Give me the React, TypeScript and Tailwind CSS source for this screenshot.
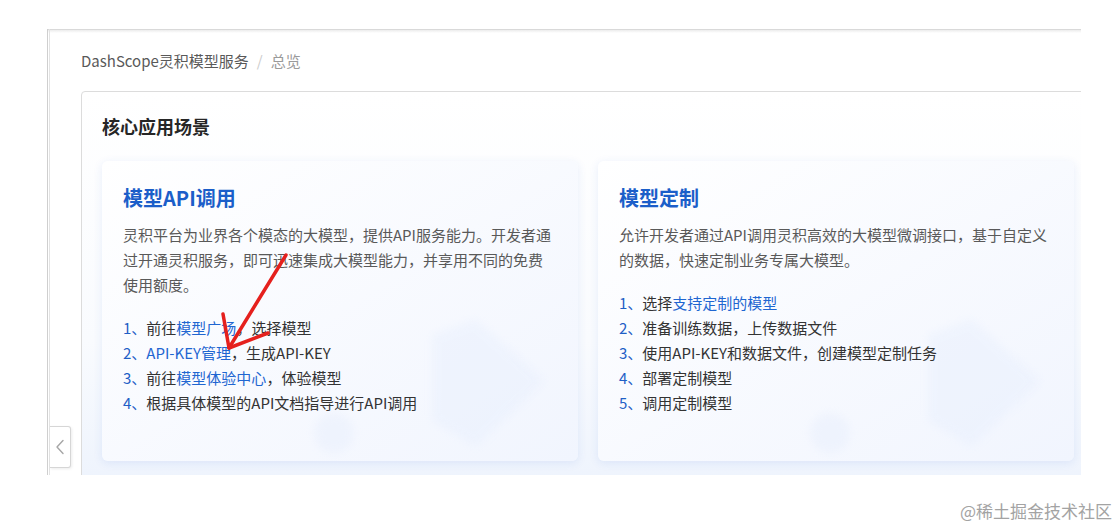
import type { ReactNode } from 'react'

const FONT = { fontFamily: '"Noto Sans CJK SC", "Noto Sans", sans-serif' }

type Step = ReactNode

function Link({ children }: { children: ReactNode }) {
  return <span className="text-[#1f66d1]">{children}</span>
}

function Deco() {
  return (
    <svg className="pointer-events-none absolute inset-0" width="476" height="300" aria-hidden="true">
      <defs>
        <filter id="soft" x="-20%" y="-20%" width="140%" height="140%">
          <feGaussianBlur stdDeviation="4" />
        </filter>
      </defs>
      <polygon points="330,174 374,158 442,220 374,286 330,260" fill="#e3ecfd" opacity="0.35" filter="url(#soft)" />
      <circle cx="232" cy="272" r="20" fill="#dfe8fb" opacity="0.3" filter="url(#soft)" />
    </svg>
  )
}

function SceneCard({ title, desc, steps }: { title: string; desc: string[]; steps: Step[] }) {
  return (
    <div className="relative h-[300px] w-[476px] overflow-hidden rounded-[6px] bg-gradient-to-br from-white to-[#f1f5fe] px-[21px] pt-[23px] shadow-[0_2px_10px_rgba(40,90,210,0.10)]">
      <Deco />
      <div className="relative">
        <h3 className="text-[20px] font-bold leading-[28px] text-[#1b5ec9]">{title}</h3>
        <p className="mt-[10px] text-[15px] leading-[25px] text-[#595959]">
          {desc.map((line, i) => (
            <span key={i} className="block whitespace-nowrap">{line}</span>
          ))}
        </p>
        <ol className="mt-[18px] text-[15px] leading-[25px] text-[#333]">
          {steps.map((s, i) => (
            <li key={i} className="whitespace-nowrap">
              <span className="text-[#1f5fc6]">{i + 1}、</span>
              {s}
            </li>
          ))}
        </ol>
      </div>
    </div>
  )
}

export default function App() {
  return (
    <div className="relative h-[528px] w-[1120px] overflow-hidden bg-white pl-[47px] pt-[29px]" style={FONT}>
      {/* 内容框架 */}
      <div className="relative h-[446px] w-[1034px] overflow-hidden border-l border-[#cfcfcf]">
        <div className="absolute left-0 right-0 top-0 h-[1px] bg-[#d9d9d9]" />
        <div className="absolute left-0 right-0 top-[1px] h-[3px] bg-gradient-to-b from-[#ececec] to-transparent" />
        <div className="absolute bottom-0 left-[1px] top-0 w-[1px] bg-[#e3e3e3]" />
        <div className="pl-[33px] pt-[22px]">
          <nav className="flex h-[20px] items-center text-[15px] leading-[20px]">
            <span className="text-[#595959]">DashScope灵积模型服务</span>
            <span className="mx-[8px] text-[#cccccc]">/</span>
            <span className="text-[#9a9a9a]">总览</span>
          </nav>

          <div className="mt-[20px] h-[500px] w-[1015px] rounded-[4px] border border-[#dcdcdc] bg-gradient-to-b from-white via-[#f9fbfe] to-[#e6eefc] px-[20px] pt-[22px]">
            <h2 className="text-[18px] font-bold leading-[24px] text-[#262626]">核心应用场景</h2>
            <div className="mt-[23px] flex gap-[20px]">
              <SceneCard
                title="模型API调用"
                desc={[
                  '灵积平台为业界各个模态的大模型，提供API服务能力。开发者通',
                  '过开通灵积服务，即可迅速集成大模型能力，并享用不同的免费',
                  '使用额度。',
                ]}
                steps={[
                  <>前往<Link>模型广场</Link>，选择模型</>,
                  <><Link>API-KEY管理</Link>，生成API-KEY</>,
                  <>前往<Link>模型体验中心</Link>，体验模型</>,
                  <>根据具体模型的API文档指导进行API调用</>,
                ]}
              />
              <SceneCard
                title="模型定制"
                desc={[
                  '允许开发者通过API调用灵积高效的大模型微调接口，基于自定义',
                  '的数据，快速定制业务专属大模型。',
                ]}
                steps={[
                  <>选择<Link>支持定制的模型</Link></>,
                  <>准备训练数据，上传数据文件</>,
                  <>使用API-KEY和数据文件，创建模型定制任务</>,
                  <>部署定制模型</>,
                  <>调用定制模型</>,
                ]}
              />
            </div>
          </div>
        </div>

        {/* 侧栏收起按钮 */}
        <button className="absolute left-[2px] top-[397px] flex h-[42px] w-[21px] items-center justify-center rounded-r-[3px] border border-l-0 border-[#d6d6d6] bg-white shadow-[1px_1px_3px_rgba(0,0,0,0.08)]">
          <svg width="10" height="16" viewBox="0 0 10 16" fill="none">
            <path d="M8 1.5 2 8l6 6.5" stroke="#a6a6a6" strokeWidth="1.4" strokeLinecap="round" strokeLinejoin="round" />
          </svg>
        </button>
      </div>

      <div className="mt-[25px] flex justify-end pr-[8px] text-[17px] leading-[22px] text-[#a3a3a3]">
        @稀土掘金技术社区
      </div>

      {/* 红色标注箭头 */}
      <svg className="pointer-events-none absolute left-0 top-0" width="1120" height="528" aria-hidden="true">
        <g stroke="#e5201d" strokeWidth="3.5" strokeLinecap="round" strokeLinejoin="round" fill="none">
          <path d="M286 255 L229 348" />
          <path d="M223 314 L229 348 L268 333" />
        </g>
      </svg>
    </div>
  )
}
